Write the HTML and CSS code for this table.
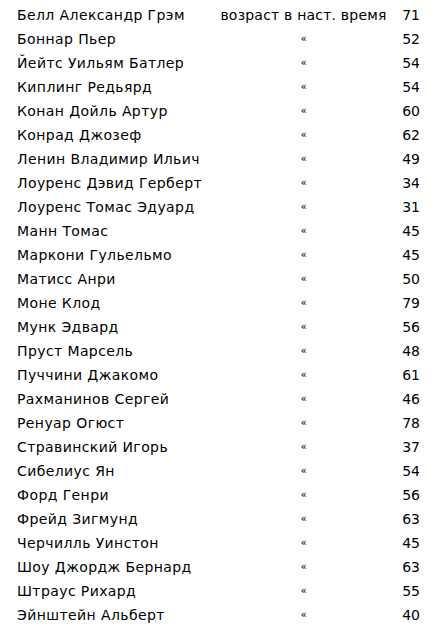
FILE: index.html
```html
<!DOCTYPE html>
<html lang="ru">
<head>
<meta charset="utf-8">
<link rel="stylesheet" href="styles.css">
</head>
<body>
<table class="list">
<tr><td class="name">Белл Александр Грэм</td><td class="mid head">возраст в наст. время</td><td class="age">71</td></tr>
<tr><td class="name">Боннар Пьер</td><td class="mid"><span class="ditto">«</span></td><td class="age">52</td></tr>
<tr><td class="name">Йейтс Уильям Батлер</td><td class="mid"><span class="ditto">«</span></td><td class="age">54</td></tr>
<tr><td class="name">Киплинг Редьярд</td><td class="mid"><span class="ditto">«</span></td><td class="age">54</td></tr>
<tr><td class="name">Конан Дойль Артур</td><td class="mid"><span class="ditto">«</span></td><td class="age">60</td></tr>
<tr><td class="name">Конрад Джозеф</td><td class="mid"><span class="ditto">«</span></td><td class="age">62</td></tr>
<tr><td class="name">Ленин Владимир Ильич</td><td class="mid"><span class="ditto">«</span></td><td class="age">49</td></tr>
<tr><td class="name">Лоуренс Дэвид Герберт</td><td class="mid"><span class="ditto">«</span></td><td class="age">34</td></tr>
<tr><td class="name">Лоуренс Томас Эдуард</td><td class="mid"><span class="ditto">«</span></td><td class="age">31</td></tr>
<tr><td class="name">Манн Томас</td><td class="mid"><span class="ditto">«</span></td><td class="age">45</td></tr>
<tr><td class="name">Маркони Гульельмо</td><td class="mid"><span class="ditto">«</span></td><td class="age">45</td></tr>
<tr><td class="name">Матисс Анри</td><td class="mid"><span class="ditto">«</span></td><td class="age">50</td></tr>
<tr><td class="name">Моне Клод</td><td class="mid"><span class="ditto">«</span></td><td class="age">79</td></tr>
<tr><td class="name">Мунк Эдвард</td><td class="mid"><span class="ditto">«</span></td><td class="age">56</td></tr>
<tr><td class="name">Пруст Марсель</td><td class="mid"><span class="ditto">«</span></td><td class="age">48</td></tr>
<tr><td class="name">Пуччини Джакомо</td><td class="mid"><span class="ditto">«</span></td><td class="age">61</td></tr>
<tr><td class="name">Рахманинов Сергей</td><td class="mid"><span class="ditto">«</span></td><td class="age">46</td></tr>
<tr><td class="name">Ренуар Огюст</td><td class="mid"><span class="ditto">«</span></td><td class="age">78</td></tr>
<tr><td class="name">Стравинский Игорь</td><td class="mid"><span class="ditto">«</span></td><td class="age">37</td></tr>
<tr><td class="name">Сибелиус Ян</td><td class="mid"><span class="ditto">«</span></td><td class="age">54</td></tr>
<tr><td class="name">Форд Генри</td><td class="mid"><span class="ditto">«</span></td><td class="age">56</td></tr>
<tr><td class="name">Фрейд Зигмунд</td><td class="mid"><span class="ditto">«</span></td><td class="age">63</td></tr>
<tr><td class="name">Черчилль Уинстон</td><td class="mid"><span class="ditto">«</span></td><td class="age">45</td></tr>
<tr><td class="name">Шоу Джордж Бернард</td><td class="mid"><span class="ditto">«</span></td><td class="age">63</td></tr>
<tr><td class="name">Штраус Рихард</td><td class="mid"><span class="ditto">«</span></td><td class="age">55</td></tr>
<tr><td class="name">Эйнштейн Альберт</td><td class="mid"><span class="ditto">«</span></td><td class="age">40</td></tr>
</table>
</body>
</html>
```
FILE: styles.css
```css
html, body {
  margin: 0;
  padding: 0;
  background: #ffffff;
}
body {
  font-family: "DejaVu Sans", Verdana, sans-serif;
  font-size: 14px;
  color: #000000;
}
.list {
  border-collapse: collapse;
  margin: 3px 0 0 17px;
  width: 403px;
  table-layout: fixed;
}
.list td {
  padding: 0;
  height: 24px;
  line-height: 24px;
  white-space: nowrap;
  vertical-align: top;
}
.name {
  width: 200px;
  text-align: left;
  letter-spacing: 0.4px;
}
.mid {
  width: 173px;
  text-align: center;
}
.head {
  letter-spacing: 0.2px;
}
.age {
  width: 30px;
  text-align: right;
}
.ditto {
  font-size: 10px;
  line-height: 10px;
  vertical-align: 2px;
  color: #000000;
}
```
